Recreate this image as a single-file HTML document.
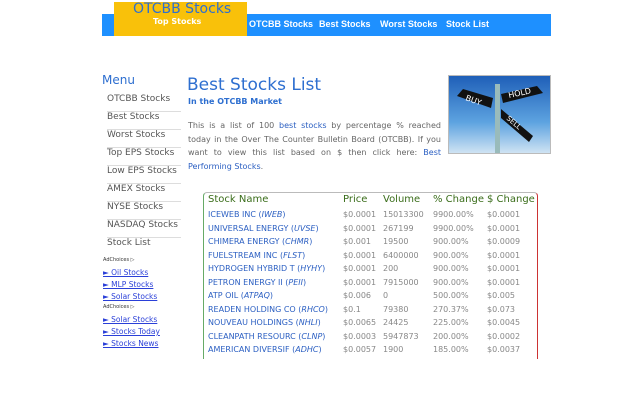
<!DOCTYPE html>
<html><head><meta charset="utf-8"><style>
body{margin:0;width:640px;height:400px;background:#fff;font-family:"DejaVu Sans","Liberation Sans",sans-serif;position:relative;overflow:hidden}
.a{position:absolute;white-space:nowrap}
#nav{left:102px;top:14px;width:449px;height:22px;background:#1e90ff}
#logo{left:114px;top:2px;width:133px;height:34px;background:#f9c10a}
.nl{color:#fff;font-size:9px;font-weight:bold;top:19px;font-family:"Liberation Sans",sans-serif}
.mi{left:107px;font-size:9px;color:#555;width:74px;border-bottom:1px solid #ddd;height:17px}
.ad{left:103px;font-size:7.5px;color:#2a3fd8;text-decoration:underline}
.r{font-size:8px;color:#888}
.n{color:#2b5fc2;left:208px;font-size:8px}
</style></head><body>
<div class="a" id="nav"></div>
<div class="a" id="logo"></div>
<div class="a" style="left:133px;top:1px;font-size:14px;color:#2e6fd0">OTCBB Stocks</div>
<div class="a" style="left:153px;top:17px;font-size:8px;color:#fff;font-weight:bold">Top Stocks</div>
<div class="a nl" style="left:249px">OTCBB Stocks</div>
<div class="a nl" style="left:319px">Best Stocks</div>
<div class="a nl" style="left:380px">Worst Stocks</div>
<div class="a nl" style="left:446px">Stock List</div>
<div class="a" style="left:102px;top:73px;font-size:12px;color:#2e6fd0">Menu</div>
<div class="a mi" style="top:94px">OTCBB Stocks</div>
<div class="a mi" style="top:112px">Best Stocks</div>
<div class="a mi" style="top:130px">Worst Stocks</div>
<div class="a mi" style="top:148px">Top EPS Stocks</div>
<div class="a mi" style="top:166px">Low EPS Stocks</div>
<div class="a mi" style="top:184px">AMEX Stocks</div>
<div class="a mi" style="top:202px">NYSE Stocks</div>
<div class="a mi" style="top:220px">NASDAQ Stocks</div>
<div class="a mi" style="top:238px;border:none">Stock List</div>
<div class="a" style="left:103px;top:257px;font-size:5px;color:#333">AdChoices ▷</div>
<div class="a ad" style="top:268px">► Oil Stocks</div>
<div class="a ad" style="top:280px">► MLP Stocks</div>
<div class="a ad" style="top:292px">► Solar Stocks</div>
<div class="a" style="left:103px;top:304px;font-size:5px;color:#333">AdChoices ▷</div>
<div class="a ad" style="top:315px">► Solar Stocks</div>
<div class="a ad" style="top:327px">► Stocks Today</div>
<div class="a ad" style="top:339px">► Stocks News</div>
<div class="a" style="left:187px;top:75px;font-size:17px;color:#2e6fd0">Best Stocks List</div>
<div class="a" style="left:188px;top:97px;font-size:8px;color:#2e6fd0;font-weight:bold">In the OTCBB Market</div>
<div class="a" style="left:188px;top:119px;width:253px;white-space:normal;font-size:8px;line-height:13.5px;color:#666;text-align:justify">This is a list of 100 <span style="color:#2b5fc2">best stocks</span> by percentage % reached today in the Over The Counter Bulletin Board (OTCBB). If you want to view this list based on $ then click here: <span style="color:#2b5fc2">Best Performing Stocks</span>.</div>
<div class="a" style="left:448px;top:75px;width:101px;height:77px;border:1px solid #bbb;background:linear-gradient(#1f5fb8,#5da3e0 60%,#cfe3f3);overflow:hidden">
<svg width="101" height="77"><rect x="46" y="8" width="5" height="69" fill="#9bb"/><polygon points="52,18 88,10 94,17 54,27" fill="#111"/><polygon points="44,22 14,13 8,20 42,32" fill="#111"/><polygon points="52,33 84,60 80,66 52,42" fill="#111"/><text x="60" y="22" fill="#fff" font-size="8" transform="rotate(-12 60 22)">HOLD</text><text x="16" y="24" fill="#fff" font-size="8" transform="rotate(20 16 24)">BUY</text><text x="57" y="43" fill="#fff" font-size="7" transform="rotate(40 57 43)">SELL</text></svg></div>
<div class="a" style="left:203px;top:192px;width:333px;height:166px;border:1px solid #bbb;border-left-color:#6a6;border-right-color:#c33;border-bottom:none;border-radius:4px 4px 0 0"></div>
<div class="a" style="top:194px;left:208px;font-size:10px;color:#3a6d1a">Stock Name</div>
<div class="a" style="top:194px;left:343px;font-size:10px;color:#3a6d1a">Price</div>
<div class="a" style="top:194px;left:383px;font-size:10px;color:#3a6d1a">Volume</div>
<div class="a" style="top:194px;left:433px;font-size:10px;color:#3a6d1a">% Change</div>
<div class="a" style="top:194px;left:487px;font-size:10px;color:#3a6d1a">$ Change</div>
<div id="rows"></div>
<script>
var d=[["ICEWEB INC","IWEB","$0.0001","15013300","9900.00%","$0.0001"],["UNIVERSAL ENERGY","UVSE","$0.0001","267199","9900.00%","$0.0001"],["CHIMERA ENERGY","CHMR","$0.001","19500","900.00%","$0.0009"],["FUELSTREAM INC","FLST","$0.0001","6400000","900.00%","$0.0001"],["HYDROGEN HYBRID T","HYHY","$0.0001","200","900.00%","$0.0001"],["PETRON ENERGY II","PEII","$0.0001","7915000","900.00%","$0.0001"],["ATP OIL","ATPAQ","$0.006","0","500.00%","$0.005"],["READEN HOLDING CO","RHCO","$0.1","79380","270.37%","$0.073"],["NOUVEAU HOLDINGS","NHLI","$0.0065","24425","225.00%","$0.0045"],["CLEANPATH RESOURC","CLNP","$0.0003","5947873","200.00%","$0.0002"],["AMERICAN DIVERSIF","ADHC","$0.0057","1900","185.00%","$0.0037"]];
var h="";d.forEach(function(r,i){var t=210+i*13.5;h+='<div class="a n" style="top:'+t+'px">'+r[0]+' (<i>'+r[1]+'</i>)</div>';[343,383,433,487].forEach(function(x,j){h+='<div class="a r" style="top:'+t+'px;left:'+x+'px">'+r[j+2]+'</div>'})});document.getElementById("rows").innerHTML=h;
</script>
</body></html>
